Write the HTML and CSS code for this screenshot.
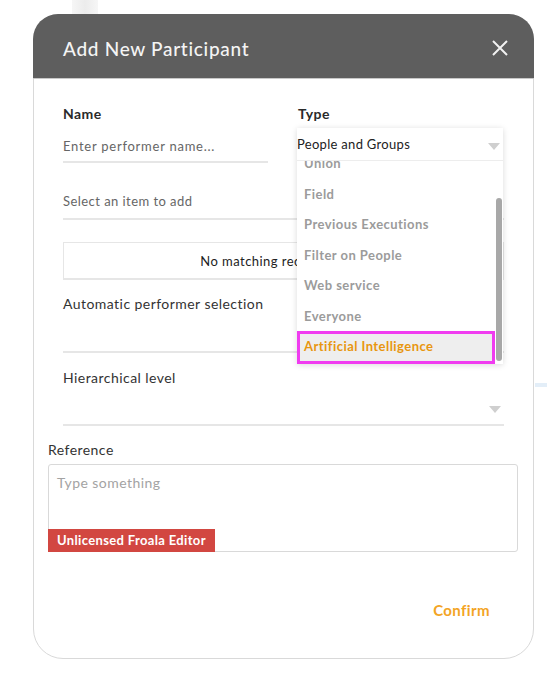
FILE: index.html
```html
<!DOCTYPE html>
<html>
<head>
<meta charset="utf-8">
<link rel="stylesheet" href="styles.css">
</head>
<body>
<div class="bg-bar"></div>
<div class="bg-line"></div>
<div class="page">
  <div class="modal">
    <div class="modal-header">
      <span class="modal-title">Add New Participant</span>
      <svg class="close" width="18" height="18" viewBox="0 0 18 18"><path d="M2 2 L16 16 M16 2 L2 16" stroke="#f2f2f2" stroke-width="2" fill="none"/></svg>
    </div>
    <div class="modal-body">
      <div class="row">
        <div class="col">
          <div class="label bold">Name</div>
          <div class="input name-input">Enter performer name...</div>
        </div>
        <div class="col type-col">
          <div class="label bold">Type</div>
          <div class="select-open">
            <div class="select-head">
              <span>People and Groups</span>
              <span class="caret"></span>
            </div>
            <div class="options">
              <div class="opt first">Union</div>
              <div class="opt">Field</div>
              <div class="opt">Previous Executions</div>
              <div class="opt">Filter on People</div>
              <div class="opt">Web service</div>
              <div class="opt">Everyone</div>
              <div class="opt active">Artificial Intelligence</div>
              <div class="scrollbar"></div>
            </div>
          </div>
        </div>
      </div>
      <div class="input select-item">Select an item to add</div>
      <div class="no-match">No matching records found</div>
      <div class="field-block auto">
        <div class="label">Automatic performer selection</div>
      </div>
      <div class="field-block hier">
        <div class="label">Hierarchical level</div>
        <span class="caret caret-hier"></span>
      </div>
    </div>
    <div class="reference">
      <div class="label">Reference</div>
      <div class="editor">
        <div class="placeholder">Type something</div>
        <div class="froala">Unlicensed Froala Editor</div>
      </div>
    </div>
    <div class="footer">
      <span class="confirm">Confirm</span>
    </div>
  </div>
</div>
</body>
</html>
```
FILE: styles.css
```css
html, body {
  margin: 0;
  padding: 0;
  background: #fff;
}
body {
  font-family: "Lato", "Open Sans", sans-serif;
  color: #333;
  letter-spacing: 0.45px;
  position: relative;
  width: 547px;
  height: 681px;
  overflow: hidden;
}
.bg-bar {
  position: absolute;
  left: 72px;
  top: 0;
  width: 26px;
  height: 16px;
  background: linear-gradient(to right, #f6f6f6, #ececec, #f6f6f6);
}
.bg-line {
  position: absolute;
  left: 535px;
  top: 383px;
  width: 12px;
  height: 4px;
  background: #e3eef8;
}
.page {
  padding: 14px 0 0 33px;
  position: relative;
}
.modal {
  width: 501px;
  height: 645px;
  box-sizing: border-box;
  border: 1px solid #d9d9d9;
  border-radius: 26px 26px 30px 30px;
  background: #fff;
  position: relative;
  display: flex;
  flex-direction: column;
}
.modal-header {
  height: 64px;
  background: #5e5e5e;
  border-radius: 25px 25px 0 0;
  border-bottom: 1px solid #c8c8c8;
  display: flex;
  align-items: center;
  justify-content: space-between;
  padding: 0 25px 0 30px;
  margin: -1px -1px 0 -1px;
}
.modal-title {
  color: #f4f4f4;
  font-size: 19px;
  letter-spacing: 0.7px;
  font-weight: 500;
  padding-top: 4px;
}
.close {
  margin-top: 3px;
}
.modal-body {
  padding: 26px 29px 0 29px;
}
.row {
  display: flex;
  gap: 29px;
}
.col {
  width: 206px;
  position: relative;
}
.label {
  font-size: 14px;
  color: #333;
  line-height: 18px;
}
.bold {
  font-weight: 700;
  color: #2a2a2a;
}
.input {
  font-size: 13px;
  color: #666;
  border-bottom: 2px solid #e6e6e6;
}
.name-input {
  width: 205px;
  margin-top: 14px;
  padding-bottom: 6px;
  line-height: 18px;
  letter-spacing: 0.75px;
}
.select-open {
  position: absolute;
  left: -1px;
  top: 23px;
  width: 206px;
  background: #fff;
  box-shadow: 0 1px 6px rgba(0, 0, 0, 0.15);
  z-index: 5;
}
.select-head {
  height: 32px;
  display: flex;
  align-items: center;
  justify-content: space-between;
  font-size: 13px;
  color: #222;
  border-bottom: 1px solid #ededed;
  padding-right: 3px;
  letter-spacing: 0.3px;
}
.caret {
  width: 0;
  height: 0;
  border-left: 6px solid transparent;
  border-right: 6px solid transparent;
  border-top: 7px solid #cfcfcf;
  margin-top: 4px;
}
.options {
  height: 203px;
  overflow: hidden;
  position: relative;
}
.opt {
  height: 30.5px;
  line-height: 30.5px;
  padding-left: 7px;
  font-size: 13px;
  font-weight: 700;
  color: #9b9b9b;
  width: 197px;
  box-sizing: border-box;
}
.opt.first {
  margin-top: -13px;
}
.opt.active {
  background: #eeeeee;
  color: #e8960f;
  box-shadow: inset 0 0 0 3px #f03cf0;
  width: 198px;
  height: 33px;
  line-height: 30px;
  margin-top: 0;
}
.scrollbar {
  position: absolute;
  right: 1px;
  top: 37px;
  width: 6px;
  height: 163px;
  background: #a8a8a8;
  border-radius: 3px;
}
.select-item {
  margin-top: 29px;
  padding-bottom: 8px;
  line-height: 18px;
}
.no-match {
  margin-top: 22px;
  height: 35px;
  border: 1px solid #e6e6e6;
  border-bottom-width: 2px;
  font-size: 13px;
  color: #222;
  display: flex;
  align-items: center;
  justify-content: center;
}
.field-block {
  border-bottom: 2px solid #e6e6e6;
  position: relative;
}
.auto {
  padding-top: 15px;
  height: 56px;
}
.hier {
  padding-top: 16px;
  height: 55px;
}
.caret-hier {
  position: absolute;
  right: 3px;
  top: 49px;
}
.reference {
  padding: 15px 15px 0 14px;
}
.editor {
  margin-top: 5px;
  height: 86px;
  border: 1px solid #d9d9d9;
  border-radius: 3px;
  position: relative;
  display: flex;
  flex-direction: column;
  justify-content: space-between;
}
.placeholder {
  font-size: 14px;
  color: #a3a3a3;
  padding: 9px 0 0 8px;
}
.froala {
  align-self: flex-start;
  background: #d24741;
  color: #fff;
  font-weight: 700;
  font-size: 13px;
  height: 23px;
  line-height: 23px;
  padding: 0 9px;
  margin: 0 0 -1px -1px;
  width: 149px;
  letter-spacing: 0.35px;
  white-space: nowrap;
}
.footer {
  display: flex;
  justify-content: flex-end;
  padding: 49px 43px 0 0;
}
.confirm {
  color: #f3a424;
  font-weight: 700;
  font-size: 15px;
  letter-spacing: 0.4px;
}
```
